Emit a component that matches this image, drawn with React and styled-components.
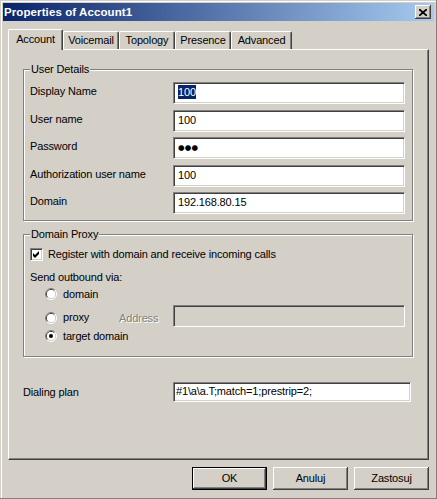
import React from "react";
import styled, { createGlobalStyle } from "styled-components";

const FACE = "#d4d0c8";
const SHADOW = "#808080";
const DARK = "#404040";

const GlobalStyle = createGlobalStyle`
  html, body {
    margin: 0;
    padding: 0;
    background: ${FACE};
  }
  body {
    font-family: "Liberation Sans", Arial, sans-serif;
    font-size: 11px;
    letter-spacing: -0.15px;
    color: #000;
  }
`;

const Window = styled.div`
  box-sizing: border-box;
  width: 437px;
  height: 499px;
  padding: 3px 3px 0 3px;
  background: ${FACE};
  box-shadow: inset -1px -1px ${SHADOW}, inset 1px 1px ${FACE}, inset 2px 2px #fff;
  display: flex;
  flex-direction: column;
`;

const TitleBar = styled.div`
  height: 18px;
  display: flex;
  align-items: center;
  padding: 0 3px 0 1px;
  background: linear-gradient(to right, #0a246a, #a6caf0);
`;

const TitleText = styled.span`
  color: #fff;
  font-weight: bold;
  font-size: 11.5px;
  letter-spacing: 0.1px;
`;

const CloseButton = styled.div`
  box-sizing: border-box;
  margin-left: auto;
  width: 16px;
  height: 14px;
  background: ${FACE};
  box-shadow: inset -1px -1px ${DARK}, inset 1px 1px #fff, inset -2px -2px ${SHADOW};
  display: flex;
  align-items: center;
  justify-content: center;
  padding-right: 1px;
`;

const Body = styled.div`
  flex: 1;
  display: flex;
  flex-direction: column;
  padding: 8px 5px 0 5px;
`;

const TabStrip = styled.div`
  display: flex;
  align-items: flex-end;
  height: 20px;
  position: relative;
  z-index: 1;
`;

const Tab = styled.div`
  box-sizing: border-box;
  width: ${(p) => p.$w}px;
  height: ${(p) => (p.$active ? 21 : 18)}px;
  margin-bottom: ${(p) => (p.$active ? -1 : 0)}px;
  padding-top: ${(p) => (p.$active ? 3 : 2)}px;
  background: ${FACE};
  border-top: 1px solid #fff;
  border-left: 1px solid #fff;
  border-right: 1px solid ${DARK};
  border-top-left-radius: 2px;
  border-top-right-radius: 2px;
  box-shadow: inset -1px 0 ${SHADOW};
  text-align: center;
  line-height: 13px;
  white-space: nowrap;
`;

const Panel = styled.div`
  box-sizing: border-box;
  height: 411px;
  padding: 13px 15px 0 14px;
  border-top: 1px solid #fff;
  border-left: 1px solid #fff;
  border-right: 1px solid ${DARK};
  border-bottom: 1px solid ${DARK};
  box-shadow: inset -1px -1px ${SHADOW};
`;

const Group = styled.fieldset`
  margin: ${(p) => p.$mt || 0}px 0 0 0;
  padding: ${(p) => p.$pad};
  min-width: 0;
  border: 1px solid ${SHADOW};
  box-shadow: 1px 1px 0 #fff, inset 1px 1px 0 #fff;
`;

const Legend = styled.legend`
  padding: 0 1px;
  line-height: 12px;
  background: ${FACE};
`;

const FieldGrid = styled.div`
  display: grid;
  grid-template-columns: 143px 232px;
  grid-auto-rows: 22px;
  row-gap: 5.5px;
`;

const Label = styled.div`
  align-self: start;
  padding-top: ${(p) => p.$pt ?? 3}px;
  line-height: 13px;
  white-space: nowrap;
`;

const TextBox = styled.div`
  box-sizing: border-box;
  height: ${(p) => p.$h || 22}px;
  display: flex;
  align-items: center;
  padding: 0 ${(p) => p.$px ?? 4}px 2px;
  background: ${(p) => (p.$disabled ? FACE : "#fff")};
  border: 1px solid;
  border-color: ${SHADOW} #fff #fff ${SHADOW};
  box-shadow: inset 1px 1px ${DARK}, inset -1px -1px ${FACE};
  white-space: nowrap;
  overflow: hidden;
`;

const Selection = styled.span`
  background: #0a246a;
  color: #fff;
  line-height: 14px;
`;

const Dots = styled.span`
  font-family: "DejaVu Sans", sans-serif;
  font-size: 7.5px;
  letter-spacing: 0.2px;
`;

const CheckRow = styled.label`
  display: flex;
  align-items: center;
  gap: 5px;
  height: 13px;
  line-height: 13px;
  white-space: nowrap;
`;

const CheckBox = styled.span`
  box-sizing: border-box;
  flex-shrink: 0;
  width: 13px;
  height: 13px;
  background: #fff;
  border: 1px solid;
  border-color: ${SHADOW} #fff #fff ${SHADOW};
  box-shadow: inset 1px 1px ${DARK}, inset -1px -1px ${FACE};
  display: flex;
  align-items: center;
  justify-content: center;
`;

const Caption = styled.div`
  margin-top: 9.5px;
  line-height: 13px;
`;

const RadioList = styled.div`
  padding-left: 15px;
  display: flex;
  flex-direction: column;
`;

const RadioRow = styled.div`
  display: grid;
  grid-template-columns: 74px 54px 232px;
  align-items: center;
  height: 21px;
`;

const RadioItem = styled.label`
  grid-column: ${(p) => (p.$wide ? "1 / -1" : "auto")};
  display: flex;
  align-items: center;
  gap: 6px;
  line-height: 13px;
  white-space: nowrap;

  svg {
    flex-shrink: 0;
  }
`;

const DisabledLabel = styled.span`
  color: ${SHADOW};
  text-shadow: 1px 1px 0 #fff;
`;

const ProxyBox = styled(TextBox)`
  margin-bottom: 4px;
`;

const PlanRow = styled.div`
  display: grid;
  grid-template-columns: 150px 238px;
  margin-top: 25px;
`;

const ButtonBar = styled.div`
  display: flex;
  justify-content: flex-end;
  gap: 6px;
  margin-top: 7px;
`;

const Button = styled.div`
  box-sizing: border-box;
  width: 75px;
  height: 23px;
  display: flex;
  align-items: center;
  justify-content: center;
  background: ${FACE};
  border: ${(p) => (p.$default ? "1px solid #000" : "none")};
  box-shadow: inset -1px -1px ${DARK}, inset 1px 1px #fff, inset -2px -2px ${SHADOW};
  line-height: 13px;
`;

function Radio({ checked }) {
  return (
    <svg width="12" height="12" viewBox="0 0 12 12">
      <path d="M2.11 9.89 A5.5 5.5 0 0 1 9.89 2.11" fill="none" stroke={SHADOW} />
      <path d="M9.89 2.11 A5.5 5.5 0 0 1 2.11 9.89" fill="none" stroke="#fff" />
      <path d="M2.82 9.18 A4.5 4.5 0 0 1 9.18 2.82" fill="none" stroke={DARK} />
      <path d="M9.18 2.82 A4.5 4.5 0 0 1 2.82 9.18" fill="none" stroke={FACE} />
      <circle cx="6" cy="6" r="4" fill="#fff" />
      {checked && <circle cx="6" cy="6" r="2" fill="#000" />}
    </svg>
  );
}

const tabs = [
  { label: "Account", w: 55, active: true },
  { label: "Voicemail", w: 56 },
  { label: "Topology", w: 56 },
  { label: "Presence", w: 56 },
  { label: "Advanced", w: 61 },
];

export default function App() {
  return (
    <>
      <GlobalStyle />
      <Window>
        <TitleBar>
          <TitleText>Properties of Account1</TitleText>
          <CloseButton>
            <svg width="8" height="7" viewBox="0 0 8 7">
              <path d="M0 0 L8 7 M8 0 L0 7" stroke="#000" strokeWidth="1.7" />
            </svg>
          </CloseButton>
        </TitleBar>
        <Body>
          <TabStrip>
            {tabs.map((t) => (
              <Tab key={t.label} $w={t.w} $active={t.active}>
                {t.label}
              </Tab>
            ))}
          </TabStrip>
          <Panel>
            <Group $pad="7px 7px 6px 6px">
              <Legend>User Details</Legend>
              <FieldGrid>
                <Label>Display Name</Label>
                <TextBox>
                  <Selection>100</Selection>
                </TextBox>
                <Label>User name</Label>
                <TextBox>100</TextBox>
                <Label>Password</Label>
                <TextBox>
                  <Dots>●●●</Dots>
                </TextBox>
                <Label>Authorization user name</Label>
                <TextBox>100</TextBox>
                <Label>Domain</Label>
                <TextBox>192.168.80.15</TextBox>
              </FieldGrid>
            </Group>
            <Group $mt={7} $pad="8px 7px 9.5px 6px">
              <Legend>Domain Proxy</Legend>
              <CheckRow>
                <CheckBox>
                  <svg width="7" height="7" viewBox="0 0 7 7">
                    <path d="M0 2 L2 4 L6 0 L6 3 L2 7 L0 5 Z" fill="#000" />
                  </svg>
                </CheckBox>
                Register with domain and receive incoming calls
              </CheckRow>
              <Caption>Send outbound via:</Caption>
              <RadioList>
                <RadioRow>
                  <RadioItem $wide>
                    <Radio />
                    domain
                  </RadioItem>
                </RadioRow>
                <RadioRow>
                  <RadioItem>
                    <Radio />
                    proxy
                  </RadioItem>
                  <DisabledLabel>Address</DisabledLabel>
                  <ProxyBox $disabled />
                </RadioRow>
                <RadioRow>
                  <RadioItem $wide>
                    <Radio checked />
                    target domain
                  </RadioItem>
                </RadioRow>
              </RadioList>
            </Group>
            <PlanRow>
              <Label $pt={4}>Dialing plan</Label>
              <TextBox $h={20} $px={2}>
                #1\a\a.T;match=1;prestrip=2;
              </TextBox>
            </PlanRow>
          </Panel>
          <ButtonBar>
            <Button $default>OK</Button>
            <Button>Anuluj</Button>
            <Button>Zastosuj</Button>
          </ButtonBar>
        </Body>
      </Window>
    </>
  );
}
